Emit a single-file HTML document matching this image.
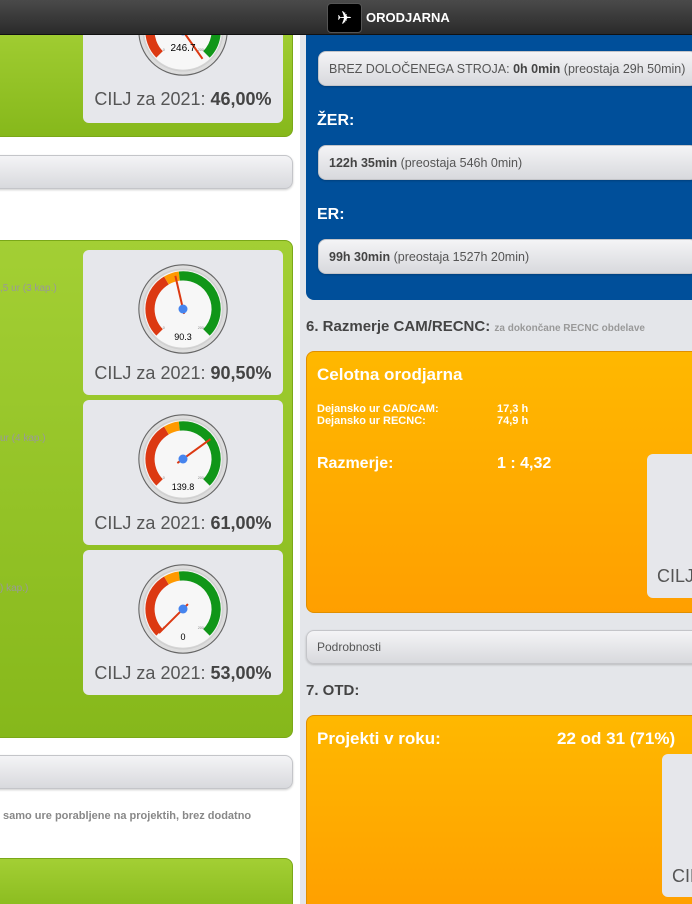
<!DOCTYPE html>
<html style="overflow:hidden;width:692px;height:904px"><head><meta charset="utf-8">
<style>
*{box-sizing:border-box;margin:0;padding:0}
body{width:692px;height:904px;overflow:hidden;position:relative;background:#fff;font-family:"Liberation Sans",Arial,sans-serif}
.abs{position:absolute}
.top{left:0;top:0;width:692px;height:35px;background:linear-gradient(#4a4a4a,#2a2a2a);border-bottom:1px solid #111;z-index:5}
.logo{left:327px;top:3px;width:35px;height:30px;background:#000;border-radius:4px;border:1px solid #555;color:#fff;font-size:18px;text-align:center;line-height:28px;z-index:6}
.title{left:366px;top:10px;color:#fff;font-weight:bold;font-size:13px;z-index:6}
.green{background:linear-gradient(#a3cf34,#86b81b);border:1px solid #7aa818;border-radius:0 8px 8px 0}
.card{background:#e6e7eb;border-radius:6px;left:83px;width:200px;text-align:center}
.card .t{position:absolute;left:0;right:0;font-size:18px;color:#555}
.card .t b{color:#444}
.btn{background:linear-gradient(#f4f4f6,#d8d9dd);border:1px solid #c4c5c9;border-radius:8px;box-shadow:0 1px 2px rgba(0,0,0,.2)}
.small{color:#999;font-size:10px}
.right{left:300px;top:35px;width:392px;height:869px;background:#e4e6ea}
.blue{left:306px;top:35px;width:400px;height:265px;background:#004f9a;border-radius:0 0 0 8px}
.bb{left:318px;width:380px;height:35px;font-size:12.5px;color:#555;padding:10px 0 0 10px;white-space:nowrap}
.bb b{color:#444}
.lab{color:#fff;font-weight:bold;font-size:16px;left:317px}
.orange{left:306px;width:400px;background:linear-gradient(#ffb800,#ff9f00);border:1px solid #e08f00;border-radius:8px}
.h{font-weight:bold;color:#444;font-size:15px;left:306px}
.w{color:#fff;font-weight:bold}
</style></head><body>
<svg width="0" height="0" style="position:absolute">
<defs>
<radialGradient id="rg"><stop offset="0.8" stop-color="#fff"/><stop offset="1" stop-color="#ccc"/></radialGradient>
<symbol id="g" viewBox="0 0 100 100">
<circle cx="50" cy="50" r="48" fill="#ddd" stroke="#666" stroke-width="1.2"/>
<circle cx="50" cy="50" r="44" fill="url(#rg)"/>
<circle cx="50" cy="50" r="42" fill="#f7f7f7"/>
<path d="M24.54 75.46 A36 36 0 0 1 32 19" fill="none" stroke="#dc3912" stroke-width="10"/>
<path d="M32 19 A36 36 0 0 1 46 14.2" fill="none" stroke="#ff9900" stroke-width="10"/>
<path d="M46 14.2 A36 36 0 0 1 75.46 75.46" fill="none" stroke="#109618" stroke-width="10"/>
<text x="28" y="72" font-size="4" fill="#888" font-family="Liberation Sans">0</text>
<text x="66" y="72" font-size="4" fill="#888" font-family="Liberation Sans">200</text>
</symbol>
</defs></svg>

<div class="abs top"></div>
<div class="abs logo">✈</div>
<div class="abs title">ORODJARNA</div>

<!-- LEFT -->
<div class="abs green" style="left:-10px;top:20px;width:303px;height:117px"></div>
<div class="abs card" style="top:20px;height:103px">
 <svg class="abs" style="left:54px;top:-35px" width="92" height="92"><use href="#g"/><g transform="translate(46,46)"><line x1="0" y1="0" x2="0" y2="-34" stroke="#dc3912" stroke-width="2" transform="rotate(145)"/><circle r="4.5" fill="#4684ee"/></g><text x="46" y="66" font-size="10" text-anchor="middle" font-family="Liberation Sans">246.7</text></svg>
 <div class="t" style="top:69px">CILJ za 2021: <b>46,00%</b></div>
</div>
<div class="abs btn" style="left:-10px;top:155px;width:303px;height:34px"></div>

<div class="abs green" style="left:-10px;top:240px;width:303px;height:498px"></div>
<div class="abs small" style="left:0;top:283px">,5 ur (3 kap.)</div>
<div class="abs small" style="left:0;top:433px">ur (4 kap.)</div>
<div class="abs small" style="left:0;top:583px">) kap.)</div>

<div class="abs card" style="top:250px;height:145px">
 <svg class="abs" style="left:54px;top:13px" width="92" height="92"><use href="#g"/><g transform="translate(46,46)"><line x1="0" y1="5" x2="0" y2="-34" stroke="#dc3912" stroke-width="2" transform="rotate(-13)"/><circle r="4.5" fill="#4684ee"/></g><text x="46" y="77" font-size="9" text-anchor="middle" font-family="Liberation Sans">90.3</text></svg>
 <div class="t" style="top:113px">CILJ za 2021: <b>90,50%</b></div>
</div>
<div class="abs card" style="top:400px;height:145px">
 <svg class="abs" style="left:54px;top:13px" width="92" height="92"><use href="#g"/><g transform="translate(46,46)"><line x1="0" y1="7" x2="0" y2="-34" stroke="#dc3912" stroke-width="2" transform="rotate(54)"/><circle r="4.5" fill="#4684ee"/></g><text x="46" y="77" font-size="9" text-anchor="middle" font-family="Liberation Sans">139.8</text></svg>
 <div class="t" style="top:113px">CILJ za 2021: <b>61,00%</b></div>
</div>
<div class="abs card" style="top:550px;height:145px">
 <svg class="abs" style="left:54px;top:13px" width="92" height="92"><use href="#g"/><g transform="translate(46,46)"><line x1="0" y1="-7" x2="0" y2="34" stroke="#dc3912" stroke-width="2" transform="rotate(45)"/><circle r="4.5" fill="#4684ee"/></g><text x="46" y="77" font-size="9" text-anchor="middle" font-family="Liberation Sans">0</text></svg>
 <div class="t" style="top:113px">CILJ za 2021: <b>53,00%</b></div>
</div>

<div class="abs btn" style="left:-10px;top:755px;width:303px;height:34px"></div>
<div class="abs" style="left:3px;top:810px;font-size:11px;color:#888;font-weight:bold">samo ure porabljene na projektih, brez dodatno</div>
<div class="abs green" style="left:-10px;top:858px;width:303px;height:60px"></div>

<!-- RIGHT -->
<div class="abs right"></div>
<div class="abs blue"></div>
<div class="abs btn bb" style="top:51px">BREZ DOLOČENEGA STROJA: <b>0h 0min</b> (preostaja 29h 50min)</div>
<div class="abs lab" style="top:112px">ŽER:</div>
<div class="abs btn bb" style="top:145px"><b>122h 35min</b> (preostaja 546h 0min)</div>
<div class="abs lab" style="top:206px">ER:</div>
<div class="abs btn bb" style="top:239px"><b>99h 30min</b> (preostaja 1527h 20min)</div>

<div class="abs h" style="top:318px">6. Razmerje CAM/RECNC: <span style="font-size:10px;color:#999">za dokončane RECNC obdelave</span></div>
<div class="abs orange" style="top:351px;height:262px"></div>
<div class="abs w" style="left:317px;top:365px;font-size:17px">Celotna orodjarna</div>
<div class="abs w" style="left:317px;top:403px;font-size:11px;line-height:12px">Dejansko ur CAD/CAM:<br>Dejansko ur RECNC:</div>
<div class="abs w" style="left:497px;top:403px;font-size:11px;line-height:12px">17,3 h<br>74,9 h</div>
<div class="abs w" style="left:317px;top:455px;font-size:16px">Razmerje:</div>
<div class="abs w" style="left:497px;top:455px;font-size:16px">1 : 4,32</div>
<div class="abs card" style="left:647px;top:454px;height:144px;width:80px"><div class="t" style="top:112px;text-align:left;padding-left:10px">CILJ</div></div>

<div class="abs btn" style="left:306px;top:630px;width:400px;height:34px;font-size:12px;color:#555;padding:9px 0 0 10px">Podrobnosti</div>
<div class="abs h" style="top:682px">7. OTD:</div>
<div class="abs orange" style="top:715px;height:200px"></div>
<div class="abs w" style="left:317px;top:729px;font-size:17px">Projekti v roku:</div>
<div class="abs w" style="left:557px;top:729px;font-size:17px">22 od 31 (71%)</div>
<div class="abs card" style="left:662px;top:754px;height:143px;width:80px"><div class="t" style="top:112px;text-align:left;padding-left:10px">CILJ</div></div>
</body></html>
